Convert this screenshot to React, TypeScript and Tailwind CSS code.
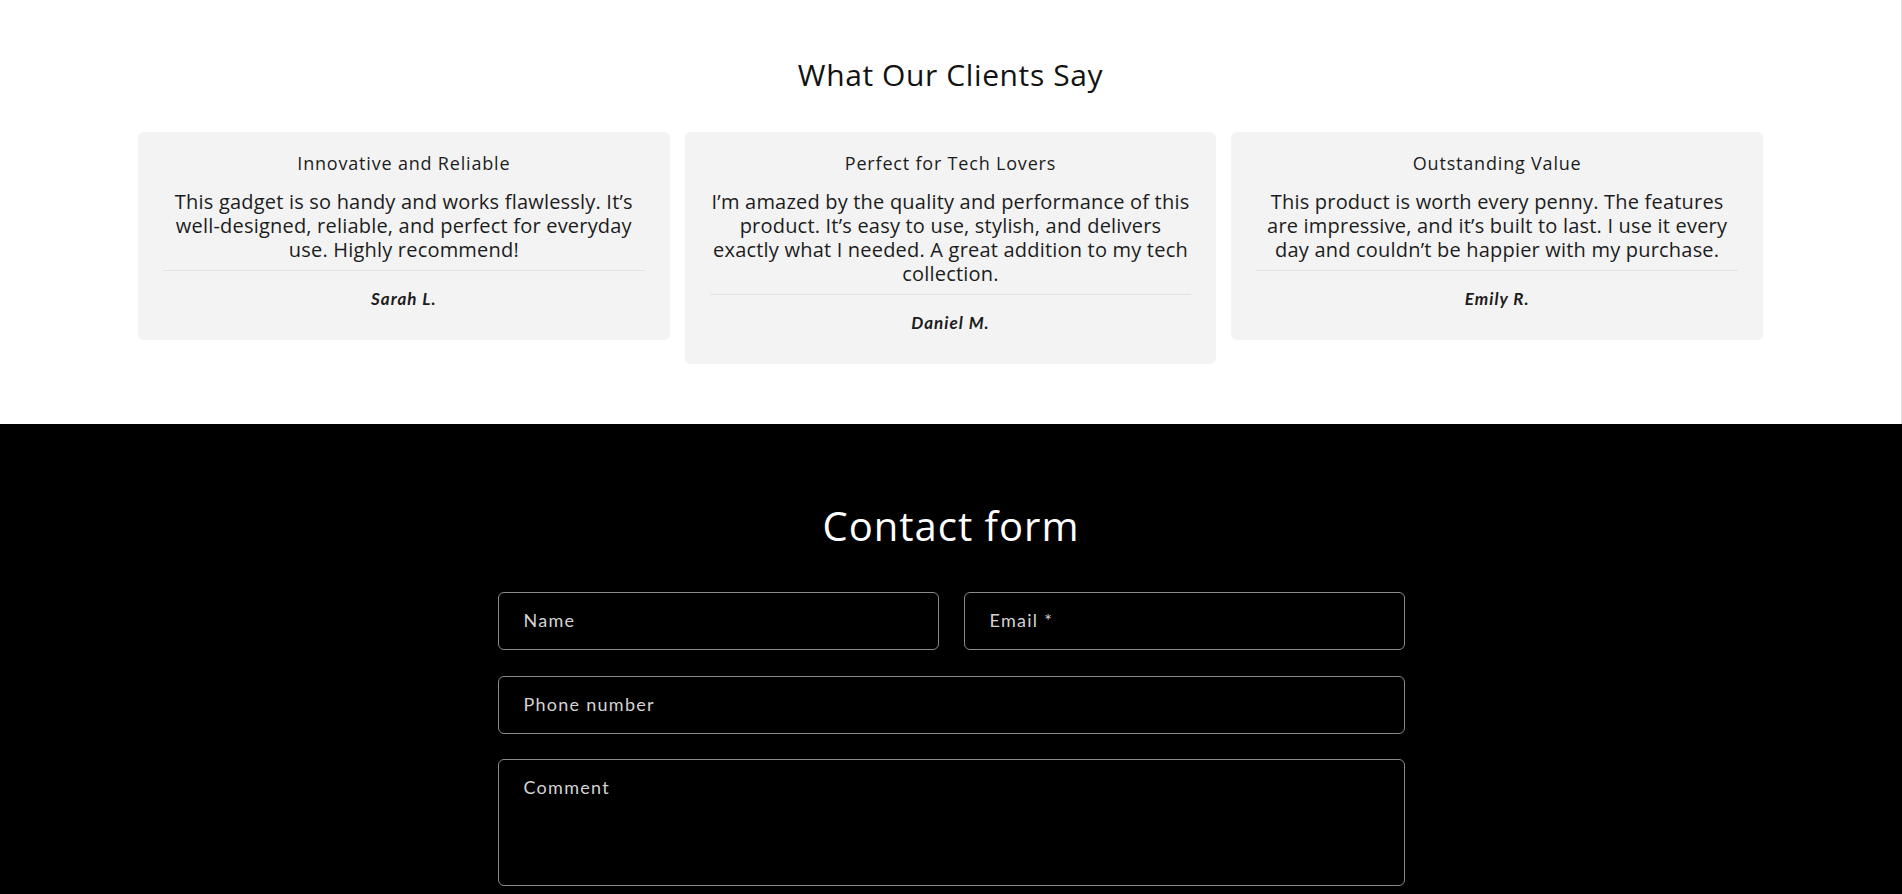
const testimonials = [
  {
    title: 'Innovative and Reliable',
    body: 'This gadget is so handy and works flawlessly. It’s well-designed, reliable, and perfect for everyday use. Highly recommend!',
    author: 'Sarah L.',
  },
  {
    title: 'Perfect for Tech Lovers',
    body: 'I’m amazed by the quality and performance of this product. It’s easy to use, stylish, and delivers exactly what I needed. A great addition to my tech collection.',
    author: 'Daniel M.',
  },
  {
    title: 'Outstanding Value',
    body: 'This product is worth every penny. The features are impressive, and it’s built to last. I use it every day and couldn’t be happier with my purchase.',
    author: 'Emily R.',
  },
];

const fieldClass =
  'w-full h-[58px] rounded-[6px] border border-[#8a8a8a] bg-black px-[25px] pb-[2px] text-[18px] tracking-[0.07em] text-white outline-none placeholder:text-[#d4d4d4] font-["Lato",sans-serif]';

const App = () => {
  return (
    <div className="min-h-screen bg-black font-['Open_Sans',sans-serif]">
      <section className="bg-white border-r border-[#e3e3e3] pt-[55px] pb-[60px]">
        <h2 className="text-center text-[30px] leading-[39px] tracking-[0.02em] text-[#121212]">
          What Our Clients Say
        </h2>

        <div className="mx-auto mt-[38px] grid w-[1625px] grid-cols-3 items-start gap-[15px]">
          {testimonials.map((t) => (
            <div key={t.author} className="rounded-[6px] bg-[#f3f3f3] px-[25px] pt-[19px] pb-[29px] text-center">
              <h3 className="text-[18px] leading-[24px] tracking-[0.045em] text-[#1c1c1c]">{t.title}</h3>
              <p className="mt-[15px] text-[20px] leading-[24px] tracking-[0.01em] text-[#1c1c1c]">{t.body}</p>
              <div className="mt-[8px] border-t border-[#e2e2e2] pt-[16px]">
                <p className="font-['Lato',sans-serif] text-[17px] leading-[24px] font-bold italic tracking-[0.06em] text-[#1c1c1c]">
                  {t.author}
                </p>
              </div>
            </div>
          ))}
        </div>
      </section>

      <section className="bg-black pt-[76px] pb-[10px]">
        <h2 className="text-center text-[40px] leading-[52px] tracking-[0.025em] text-white">Contact form</h2>

        <form className="mx-auto mt-[40px] w-[907px]">
          <div className="grid grid-cols-2 gap-[25px]">
            <input className={fieldClass} placeholder="Name" />
            <input className={fieldClass} placeholder="Email *" />
          </div>
          <input className={`${fieldClass} mt-[26px]`} placeholder="Phone number" />
          <textarea
            className="mt-[25px] block h-[127px] w-full resize-none rounded-[6px] border border-[#8a8a8a] bg-black px-[25px] pt-[15px] text-[18px] leading-[24px] tracking-[0.07em] text-white outline-none placeholder:text-[#d4d4d4] font-['Lato',sans-serif]"
            placeholder="Comment"
          />
        </form>
      </section>
    </div>
  );
};

export default App;
